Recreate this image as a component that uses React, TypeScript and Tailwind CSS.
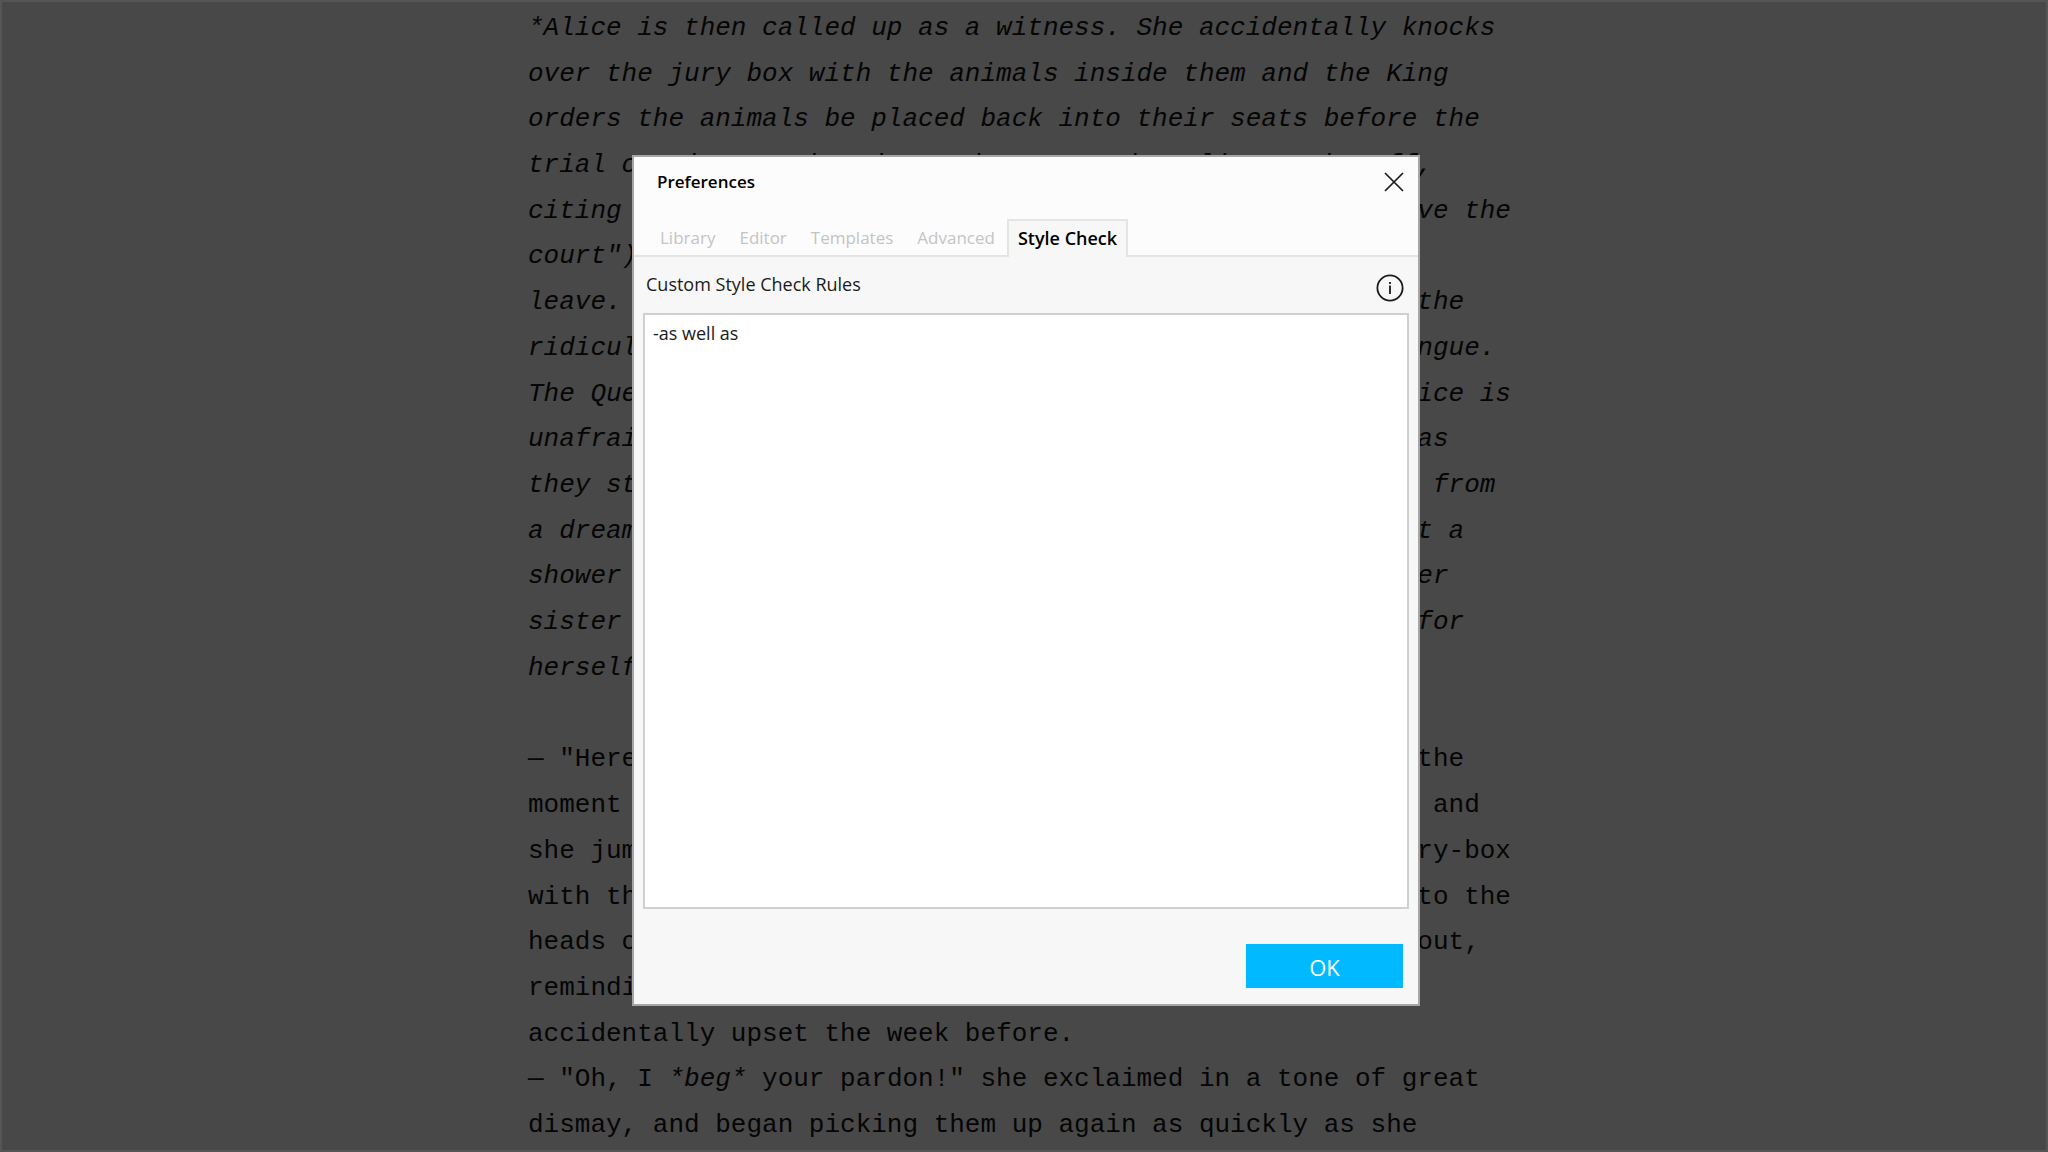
import React, { useState } from 'react'

const summary = [
  '*Alice is then called up as a witness. She accidentally knocks',
  'over the jury box with the animals inside them and the King',
  'orders the animals be placed back into their seats before the',
  'trial continues. The King and Queen order Alice to be off,',
  'citing Rule 42 ("All persons more than a mile high to leave the',
  'court"), Alice disputes their judgement and refuses to',
  'leave. She argues with the King and Queen of Hearts over the',
  'ridiculous proceedings, all the while refusing to hold tongue.',
  'The Queen shouts her familiar "Off with her head!" but Alice is',
  'unafraid, calling them out as just a pack of cards; just as',
  "they start to swarm over her. Alice's sister wakes her up from",
  'a dream, brushing what turns out to be some leaves and not a',
  "shower of playing cards from Alice's face. Alice leaves her",
  'sister on the bank to imagine all the curious happenings for',
  'herself.*',
]

const story = [
  '— "Here!" cried Alice, quite forgetting in the flurry of the',
  'moment how large she had grown in these last few minutes, and',
  'she jumped up in such a hurry that she tipped over the jury-box',
  'with the edge of her skirt, upsetting all the jurymen on to the',
  'heads of the crowd below, and there they lay sprawling about,',
  'reminding her very much of a globe of goldfish she had',
  'accidentally upset the week before.',
]

const tabs = ['Library', 'Editor', 'Templates', 'Advanced', 'Style Check']

function Line({ children }: { children?: React.ReactNode }) {
  return <p className="flex-1 flex items-center whitespace-pre">{children}</p>
}

function Editor() {
  return (
    <main className="h-screen border-2 border-[#555555] bg-[#484848] overflow-hidden pt-[3px] pb-[2px]">
      <div className="h-full w-full max-w-[992px] mx-auto flex flex-col text-[26px] leading-none text-[#050505] font-['Liberation_Mono',monospace]">
        {summary.map((line) => (
          <Line key={line}>
            <em>{line}</em>
          </Line>
        ))}
        <Line />
        {story.map((line) => (
          <Line key={line}>{line}</Line>
        ))}
        <Line>
          — "Oh, I <em>*beg*</em> your pardon!" she exclaimed in a tone of great
        </Line>
        <Line>dismay, and began picking them up again as quickly as she</Line>
      </div>
    </main>
  )
}

export default function App() {
  const [activeTab, setActiveTab] = useState('Style Check')
  const [rules, setRules] = useState('-as well as')

  return (
    <div className="relative">
      <Editor />

      {/* Preferences dialog */}
      <div className="absolute inset-0 flex items-center justify-center pt-2 pl-1">
        <section
          role="dialog"
          aria-labelledby="prefs-title"
          className="w-[788px] border-2 border-[#a6a6a6] bg-[#f7f7f7] text-[#1a1a1a] text-[18px] leading-6 font-['Open_Sans','Noto_Sans',sans-serif]"
        >
          <header className="bg-[#fcfcfc]">
            <div className="flex items-center justify-between h-[50px] pl-[23px] pr-[14px]">
              <h1 id="prefs-title" className="font-semibold text-[17px] text-black">Preferences</h1>
              <button aria-label="Close">
                <svg width="20" height="20" viewBox="0 0 20 20" fill="none" stroke="#1a1a1a" strokeWidth="1.7">
                  <path d="M1 1L19 19M19 1L1 19" />
                </svg>
              </button>
            </div>

            <div role="tablist" className="flex mt-3 h-[38px]">
              <span className="w-[14px] border-b-2 border-[#e4e4e4]" />
              {tabs.map((tab) => (
                <button
                  key={tab}
                  role="tab"
                  aria-selected={tab === activeTab}
                  onClick={() => setActiveTab(tab)}
                  className={
                    tab === activeTab
                      ? 'px-[9px] border-2 border-b-0 border-[#e4e4e4] bg-[#f7f7f7] pb-[2px] text-[18px] font-semibold text-black'
                      : 'px-3 border-b-2 border-[#e4e4e4] pt-[2px] text-[17px] text-[#c4c4c4]'
                  }
                >
                  {tab}
                </button>
              ))}
              <span className="flex-1 border-b-2 border-[#e4e4e4]" />
            </div>
          </header>

          <div className="px-[9px]">
            <div className="flex justify-between h-[56px] pt-[15px] pl-[3px] pr-[5px]">
              <label htmlFor="rules">Custom Style Check Rules</label>
              <button aria-label="About style check rules" className="h-8">
                <svg width="28" height="28" viewBox="0 0 28 28" fill="none" stroke="#1a1a1a" strokeWidth="1.8">
                  <circle cx="14" cy="14" r="12.6" />
                  <path d="M14 11.5V20M14 8V10" />
                </svg>
              </button>
            </div>
            <textarea
              id="rules"
              value={rules}
              onChange={(e) => setRules(e.target.value)}
              className="block w-full h-[596px] resize-none border-2 border-[#d0d0d0] bg-white px-2 py-[6px] outline-none"
            />
          </div>

          <footer className="flex justify-end pt-[35px] pb-4 pr-[15px]">
            <button className="w-[157px] h-11 pt-[2px] bg-[#00b9ff] text-white text-[22px]">OK</button>
          </footer>
        </section>
      </div>
    </div>
  )
}
